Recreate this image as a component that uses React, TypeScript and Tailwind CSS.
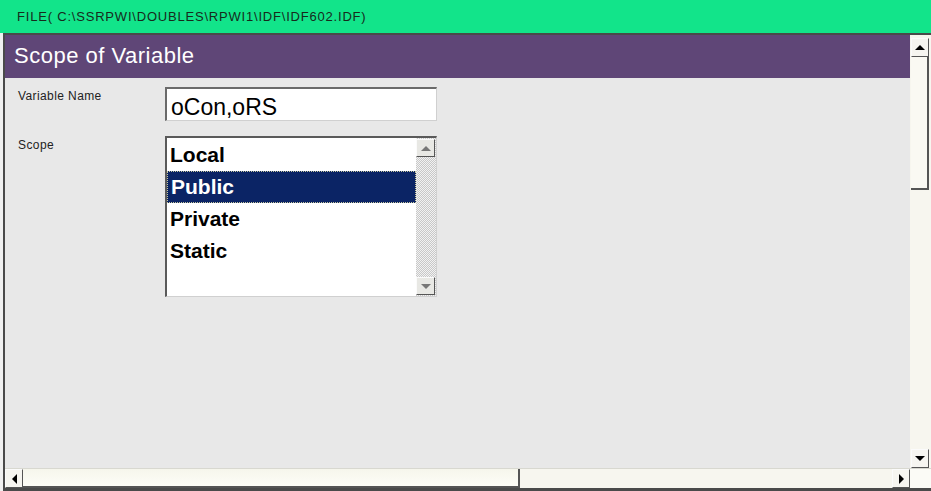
import React from "react";

const Tri = ({ dir, color = "#000" }: { dir: "up" | "down" | "left" | "right"; color?: string }) => {
  const pts =
    dir === "up"
      ? "0,6 5,1 10,6"
      : dir === "down"
      ? "0,1 5,6 10,1"
      : dir === "left"
      ? "6,0 1,5 6,10"
      : "1,0 6,5 1,10";
  const w = dir === "up" || dir === "down" ? 10 : 7;
  const h = dir === "up" || dir === "down" ? 7 : 10;
  return (
    <svg width={w} height={h} viewBox={`0 0 ${w} ${h}`}>
      <polygon points={pts} fill={color} />
    </svg>
  );
};

const SBtn = ({ dir, cls, color }: { dir: "up" | "down" | "left" | "right"; cls: string; color?: string }) => (
  <div className={`flex items-center justify-center bg-[#f6f5f0] border border-t-[#fbfbfb] border-l-[#fbfbfb] border-r-[#555] border-b-[#555] ${cls}`}>
    <Tri dir={dir} color={color} />
  </div>
);

export default function App() {
  const items = ["Local", "Public", "Private", "Static"];
  return (
    <div
      className="w-[931px] h-[491px] flex flex-col bg-[#f0f0f0] overflow-hidden"
      style={{ fontFamily: '"Liberation Sans", Arial, sans-serif' }}
    >
      <div className="h-[33px] shrink-0 bg-[#12e48a] flex items-center pl-[17px] text-[13px] text-[#172a1c] tracking-[0.8px]">
        FILE( C:\SSRPWI\DOUBLES\RPWI1\IDF\IDF602.IDF)
      </div>
      <div className="flex-1 flex pl-[3px] min-h-0">
        <div className="flex-1 flex flex-col border-l-2 border-t-2 border-b-[3px] border-[#4a4a4a] min-h-0">
          <div className="flex-1 flex min-h-0">
            <div className="flex-1 flex flex-col bg-[#e8e8e8] min-w-0">
              <div className="h-[43px] shrink-0 bg-[#5f4677] flex items-center pl-[9px] text-white text-[22px] tracking-[0.5px] pb-[3px]">
                Scope of Variable
              </div>
              <div className="flex-1 pl-[13px] pt-[9px]">
                <div className="flex">
                  <div className="w-[147px] text-[12px] text-[#222] tracking-[0.4px]">Variable Name</div>
                  <div className="w-[272px] h-[34px] bg-white border-t-2 border-l-2 border-t-[#6a6a6a] border-l-[#6a6a6a] border-r border-b border-r-[#d0d0d0] border-b-[#d0d0d0] flex items-center pl-[4px] text-[23px] text-black pt-[5px]">
                    oCon,oRS
                  </div>
                </div>
                <div className="flex mt-[15px]">
                  <div className="w-[147px] text-[12px] text-[#222] tracking-[0.4px]">Scope</div>
                  <div className="w-[272px] h-[161px] bg-white border-t-2 border-l-2 border-t-[#5a5a5a] border-l-[#5a5a5a] border-r border-b border-r-[#d0d0d0] border-b-[#d0d0d0] flex">
                    <div className="flex-1 flex flex-col pt-[1px]">
                      {items.map((t, i) => (
                        <div
                          key={t}
                          className={`h-[32px] flex items-center pl-[3px] text-[21px] font-semibold ${
                            i === 1
                              ? "bg-[#0b2465] text-white border border-dotted border-[#c8c8a0]"
                              : "text-black"
                          }`}
                        >
                          {t}
                        </div>
                      ))}
                    </div>
                    <div
                      className="w-[20px] flex flex-col justify-between py-[1px] pr-[1px]"
                      style={{
                        backgroundColor: "#e4e4e4",
                        backgroundImage:
                          "repeating-conic-gradient(#c8c8c8 0% 25%, #f2f2f2 0% 50%)",
                        backgroundSize: "2px 2px",
                      }}
                    >
                      <SBtn dir="up" cls="h-[18px] w-[19px] !bg-[#e8e8e4]" color="#777" />
                      <SBtn dir="down" cls="h-[18px] w-[19px] !bg-[#e8e8e4]" color="#777" />
                    </div>
                  </div>
                </div>
              </div>
            </div>
            <div className="w-[21px] shrink-0 bg-[#f7f6ef] flex flex-col pt-[3px] pl-[1px]">
              <SBtn dir="up" cls="h-[19px] w-[18px]" />
              <div className="h-[133px] w-[18px] border-r-2 border-b-2 border-[#555] bg-[#faf9f3]" />
              <div className="flex-1" />
              <SBtn dir="down" cls="h-[19px] w-[18px]" />
            </div>
          </div>
          <div className="h-[20px] shrink-0 flex bg-[#f7f6ef] border-t border-[#d8d8d0]">
            <SBtn dir="left" cls="h-[19px] w-[18px]" />
            <div className="w-[497px] h-[19px] border-r-2 border-b-2 border-[#555] bg-gradient-to-b from-[#f6f6ec] to-[#fdfdf7]" />
            <div className="flex-1" />
            <SBtn dir="right" cls="h-[19px] w-[18px]" />
            <div className="w-[21px] bg-[#fbfbf6]" />
          </div>
        </div>
      </div>
    </div>
  );
}
